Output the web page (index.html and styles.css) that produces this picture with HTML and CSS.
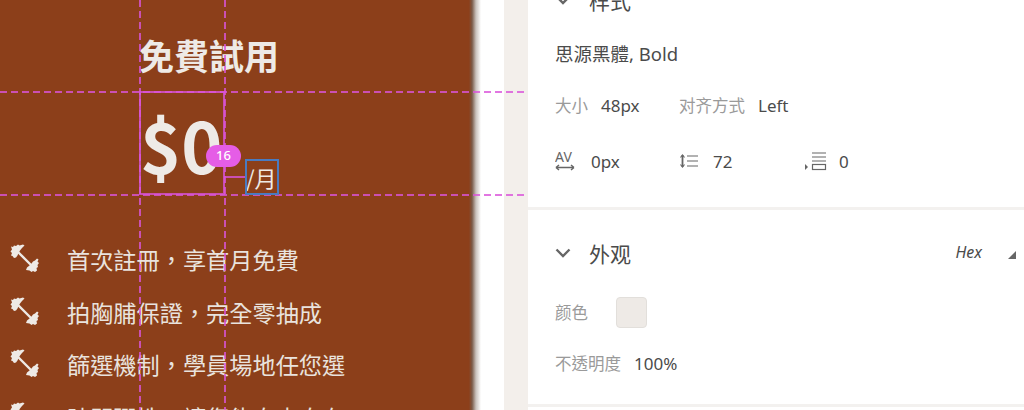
FILE: index.html
```
<!DOCTYPE html>
<html lang="zh-Hant">
<head>
<meta charset="utf-8">
<title>免費試用</title>
<link rel="stylesheet" href="styles.css">
</head>
<body>
<svg class="defs" width="0" height="0" aria-hidden="true">
  <symbol id="bell" viewBox="0 0 30 30">
    <path d="M9 9 L22 22" stroke="#eeeae6" stroke-width="2.400" fill="none"/>
    <path d="M2 3.500 L4 4 L5 2.500 L7 3 L9 1.500 L10.500 2.500 L14 1.500 L15.500 2.500 L13 5 L11 7.500 L9.500 10 L8.500 12.500 L7 14.500 L5 15 L3.500 13 L2 12.500 L3 10 L1.500 8.500 L3 6.500 Z" fill="#eeeae6"/>
    <path d="M28 15.500 L29.500 16.500 L28.500 18.500 L30 20 L28.500 22 L29 24 L27.500 25 L28 27.500 L26 29 L24 28 L22.500 29 L20.500 27.500 L17 27 L18 24.500 L20.500 22.500 L22.500 20.500 L24 18.500 L26 17.500 Z" fill="#eeeae6"/>
  </symbol>
  <symbol id="chev" viewBox="0 0 16 10">
    <path d="M1.500 1.500 L8 8 L14.500 1.500" stroke="#666" stroke-width="2.400" fill="none"/>
  </symbol>
</svg>
<div class="app">
  <main class="canvas">
    <div class="artboard">
      <h1 class="title">免費試用</h1>
      <div class="price">
        <span class="amount">$0</span>
        <span class="unit">/月</span>
      </div>
      <ul class="features">
        <li class="feature"><svg class="bell"><use href="#bell"/></svg>首次註冊，享首月免費</li>
        <li class="feature"><svg class="bell"><use href="#bell"/></svg>拍胸脯保證，完全零抽成</li>
        <li class="feature"><svg class="bell"><use href="#bell"/></svg>篩選機制，學員場地任您選</li>
        <li class="feature"><svg class="bell"><use href="#bell"/></svg>時間彈性，讓您能自由自在</li>
      </ul>
    </div>
    <div class="guide-h guide-top"></div>
    <div class="guide-h guide-bottom"></div>
    <div class="guide-v guide-left"></div>
    <div class="guide-v guide-right"></div>
    <div class="sel-box"></div>
    <div class="connector"></div>
    <div class="unit-box"></div>
    <div class="badge">16</div>
  </main>
  <div class="gutter"></div>
  <aside class="panel">
    <section class="section section-text">
      <header class="head"><svg class="chev"><use href="#chev"/></svg><span>样式</span></header>
      <div class="font-name">思源黑體, Bold</div>
      <div class="row row-size">
        <span class="lbl">大小</span><span class="val val-size">48px</span>
        <span class="lbl lbl-align">对齐方式</span><span class="val">Left</span>
      </div>
      <div class="row row-metrics">
        <span class="metric metric-a">
          <svg class="ic" width="28" height="24" viewBox="0 0 28 24"><text x="0" y="13" class="av">AV</text><path d="M1 18.500 H19 M1 18.500 L4 16 M1 18.500 L4 21 M19 18.500 L16 16 M19 18.500 L16 21" stroke="#666" stroke-width="1.500" fill="none"/></svg>
          <span class="val">0px</span>
        </span>
        <span class="metric metric-b">
          <svg class="ic" width="22" height="18" viewBox="0 0 22 18"><path d="M3.500 3 V15" stroke="#666" stroke-width="1.800" fill="none"/><path d="M1.500 5.500 L3.500 3 L5.500 5.500 M1.500 12.500 L3.500 15 L5.500 12.500 M8 4 H19 M8 9 H19 M8 14 H19" stroke="#666" stroke-width="1.200" fill="none"/></svg>
          <span class="val">72</span>
        </span>
        <span class="metric metric-c">
          <svg class="ic" width="24" height="20" viewBox="0 0 24 20"><path d="M8 2 H22 M8 6 H22 M8 10 H22" stroke="#666" stroke-width="1.200" fill="none"/><rect x="8.500" y="13.500" width="13" height="5" fill="none" stroke="#666" stroke-width="1.200"/><path d="M1 13 L4 16 L1 19 Z" fill="#666"/></svg>
          <span class="val">0</span>
        </span>
      </div>
    </section>
    <section class="section section-look">
      <header class="head head-look">
        <svg class="chev"><use href="#chev"/></svg><span>外观</span>
        <em class="hex">Hex</em><i class="tri"></i>
      </header>
      <div class="row row-color"><span class="lbl lbl-color">颜色</span><span class="swatch"></span></div>
      <div class="row row-opacity"><span class="lbl">不透明度</span><span class="val val-op">100%</span></div>
    </section>
    <section class="section"></section>
  </aside>
</div>
</body>
</html>
```

FILE: styles.css
```
* { box-sizing: border-box; }
html, body { margin: 0; height: 100%; overflow: hidden; background: #fff; }
body { font-family: "Noto Sans", "Noto Sans CJK TC", sans-serif; color: #4b4b4b; }
.defs { position: absolute; }
.app { display: flex; width: 1024px; height: 410px; overflow: hidden; }

.canvas {
  position: relative; width: 504px; flex: none;
  background: linear-gradient(to right, #8c3f1a 469px, #7a5a48 472px, #c9c2bd 476px, #fff 481px);
}
.artboard {
  width: 470px; height: 410px; color: #eeeae6; overflow: hidden;
  font-family: "Noto Sans CJK TC", sans-serif;
}
.title { margin: 0; padding: 32px 0 0 139px; font-size: 35px; line-height: 46px; font-weight: 700; }
.price { display: flex; align-items: flex-start; height: 116px; padding-left: 140px; }
.amount { font-size: 70px; line-height: 104px; font-weight: 700; margin-top: 14px; width: 106px; }
.unit { font-size: 22px; line-height: 34px; margin-top: 82px; font-weight: 400; }
.features { list-style: none; margin: 0; padding: 39px 0 0 9px; }
.feature { display: flex; align-items: center; height: 52.500px; font-size: 23.200px; white-space: nowrap; color: #e9e3de; }
.bell { width: 30px; height: 30px; margin-right: 28px; flex: none; position: relative; top: -1px; }

.guide-h {
  position: absolute; left: 0; width: 526px; height: 2px;
  background: repeating-linear-gradient(to right, rgba(218, 84, 218, .8) 0 7px, transparent 7px 11px);
}
.guide-top { top: 91px; }
.guide-bottom { top: 194px; }
.guide-v {
  position: absolute; top: 0; height: 410px; width: 2px;
  background: repeating-linear-gradient(to bottom, rgba(218, 84, 218, .8) 0 7px, transparent 7px 11px);
}
.guide-left { left: 138.500px; }
.guide-right { left: 223.500px; }
.sel-box { position: absolute; left: 139px; top: 91px; width: 86px; height: 104px; border: 2px solid rgba(218, 84, 218, .8); }
.connector { position: absolute; left: 224px; top: 176px; width: 22px; height: 2px; background: rgba(218, 84, 218, .8); }
.unit-box {
  position: absolute; left: 245px; top: 159px; width: 34px; height: 36px;
  border: 2px solid #4a7bc0;
}
.badge {
  position: absolute; left: 206px; top: 145px; width: 35px; height: 22px; border-radius: 11px;
  background: #e55de6; color: #fff; font-size: 13px; font-weight: 500; line-height: 20px; text-align: center;
}

.gutter { width: 24px; flex: none; background: #f3efeb; }
.panel { flex: 1; display: flex; flex-direction: column; background: #fff; }
.section { border-bottom: 3px solid #f3f1ef; padding-left: 27px; }
.section:last-child { border-bottom: 0; }
.section-text { height: 210px; }
.section-look { height: 197px; }
.head { display: flex; align-items: center; height: 30px; margin-top: -15px; font-size: 21px; color: #4b4b4b; font-family: "Noto Sans CJK SC", sans-serif; }
.chev { width: 16px; height: 10px; margin-right: 18px; flex: none; }
.head-look { margin-top: 28px; padding-right: 8px; }
.hex { margin-left: auto; font-size: 16px; font-style: italic; font-family: "Noto Sans", sans-serif; margin-right: 26px; position: relative; top: -1px; }
.tri { width: 0; height: 0; border-style: solid; border-width: 0 0 8px 8px; border-color: transparent transparent #666 transparent; margin-top: 4px; }
.font-name { margin-top: 25px; font-size: 18.500px; line-height: 28px; color: #4b4b4b; font-family: "Noto Sans", "Noto Sans CJK TC", sans-serif; }
.row { display: flex; align-items: center; font-size: 16px; }
.lbl { color: #9a9a9a; font-family: "Noto Sans CJK SC", sans-serif; font-size: 16.500px; }
.val { color: #4b4b4b; font-size: 17px; }
.row-size { margin-top: 25px; height: 24px; }
.val-size { margin-left: 13px; width: 78px; }
.lbl-align { margin-right: 13px; }
.row-metrics { margin-top: 32px; height: 24px; }
.metric { display: flex; align-items: center; }
.ic { flex: none; }
.av { font-family: "Noto Sans", sans-serif; font-size: 14px; fill: #666; }
.metric-a { width: 124px; gap: 8px; }
.metric-b { width: 124px; gap: 12px; }
.metric-c { gap: 11px; margin-left: 1px; }
.row-color { margin-top: 28px; height: 32px; }
.lbl-color { width: 61px; }
.swatch { width: 31px; height: 31px; border-radius: 4px; background: #eeeae6; border: 1px solid #e2dfdb; }
.row-opacity { margin-top: 23px; height: 24px; }
.val-op { margin-left: 13px; }
```
